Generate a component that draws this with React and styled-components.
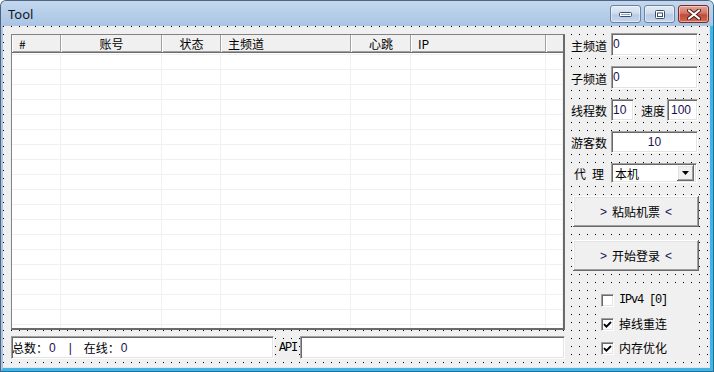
import React from 'react';
import styled, { createGlobalStyle, css } from 'styled-components';

const CJK = `"Noto Sans CJK SC", "Liberation Sans", sans-serif`;
const LATIN = `"Liberation Sans", "Noto Sans CJK SC", sans-serif`;
const MONO = `"Liberation Mono", "Noto Sans CJK SC", monospace`;
const INK = '#1a1050';

const GlobalStyle = createGlobalStyle`
  html, body { margin: 0; padding: 0; background: #ffffff; }
  body { font-family: ${CJK}; font-size: 12px; color: #000; }
`;

const columns = [
  { key: 'idx', label: '#', width: 49, align: 'left' },
  { key: 'account', label: '账号', width: 101, align: 'center' },
  { key: 'state', label: '状态', width: 59, align: 'center' },
  { key: 'main', label: '主频道', width: 130, align: 'left' },
  { key: 'beat', label: '心跳', width: 60, align: 'center' },
  { key: 'ip', label: 'IP', width: 135, align: 'left' },
  { key: 'fill', label: '', width: 17, align: 'left' },
];
const gridCols = columns.map((c) => `${c.width}px`).join(' ');
const emptyRows = Array.from({ length: 19 }, (_, i) => i);

const sunken = css`
  box-sizing: border-box;
  background: #ffffff;
  border: 1px solid;
  border-color: #a0a0a0 #ffffff #ffffff #a0a0a0;
  box-shadow: inset 1px 1px #696969, inset -1px -1px #e3e3e3;
`;

const raised = css`
  box-sizing: border-box;
  background: #f0f0f0;
  border: none;
  box-shadow: inset -1px -1px #696969, inset 1px 1px #ffffff,
    inset -2px -2px #a0a0a0, inset 2px 2px #e3e3e3;
`;

function Tick() {
  return (
    <svg width="9" height="9" viewBox="0 0 9 9">
      <path d="M1 4.2 L3.4 6.6 L8 2" stroke="#000" strokeWidth="1.9" fill="none" />
    </svg>
  );
}

export default function App() {
  return (
    <>
      <GlobalStyle />
      <Window>
        <TitleBar>
          <Caption>Tool</Caption>
          <CaptionButtons>
            <CaptionButton aria-label="minimize">
              <svg width="13" height="5" viewBox="0 0 13 5">
                <rect x="0.5" y="0.5" width="12" height="4" rx="1" fill="#ffffff" stroke="#3b4f6d" />
                <rect x="2" y="2" width="9" height="1" fill="#8ea6c6" />
              </svg>
            </CaptionButton>
            <CaptionButton aria-label="maximize">
              <svg width="10" height="9" viewBox="0 0 10 9">
                <rect x="0.5" y="0.5" width="9" height="8" rx="1" fill="#ffffff" stroke="#3b4f6d" />
                <rect x="2.5" y="3" width="5" height="3.5" fill="#ffffff" stroke="#3b4f6d" />
              </svg>
            </CaptionButton>
            <CaptionButton $close aria-label="close">
              <svg width="14" height="11" viewBox="0 0 14 11">
                <path d="M2 1.5 L12 9.5 M12 1.5 L2 9.5" stroke="#4a1a14" strokeWidth="4" strokeLinecap="round" />
                <path d="M2 1.5 L12 9.5 M12 1.5 L2 9.5" stroke="#ffffff" strokeWidth="2.2" strokeLinecap="round" />
              </svg>
            </CaptionButton>
          </CaptionButtons>
        </TitleBar>

        <Frame>
          <Client>
            <MainColumn>
              <ListView>
                <ListHeader>
                  {columns.map((c) => (
                    <HeaderCell key={c.key} $align={c.align}>{c.label}</HeaderCell>
                  ))}
                </ListHeader>
                <ListBody>
                  {emptyRows.map((r) => (
                    <ListRow key={r}>
                      {columns.map((c) => (
                        <ListCell key={c.key} />
                      ))}
                    </ListRow>
                  ))}
                </ListBody>
              </ListView>

              <BottomBar>
                <StatusBox>
                  总数：<Num>0</Num>
                  <Sep>|</Sep>
                  在线：<Num>0</Num>
                </StatusBox>
                <ApiLabel>API</ApiLabel>
                <ApiBox />
              </BottomBar>
            </MainColumn>

            <Side>
              <Fields>
                <Field $h={23}>
                  <FieldLabel>主频道</FieldLabel>
                  <TextBox $w={87}>0</TextBox>
                </Field>
                <Field $h={23}>
                  <FieldLabel>子频道</FieldLabel>
                  <TextBox $w={87}>0</TextBox>
                </Field>
                <Field $h={22}>
                  <FieldLabel>线程数</FieldLabel>
                  <TextBox $w={23}>10</TextBox>
                  <InlineLabel>速度</InlineLabel>
                  <TextBox $w={31} $pad={3}>100</TextBox>
                </Field>
                <Field $h={22}>
                  <FieldLabel>游客数</FieldLabel>
                  <TextBox $w={87} $center>10</TextBox>
                </Field>
                <Field $h={20}>
                  <FieldLabel $spread>
                    <span>代</span>
                    <span>理</span>
                  </FieldLabel>
                  <Combo>
                    <ComboText>本机</ComboText>
                    <ComboArrow>
                      <svg width="7" height="4" viewBox="0 0 7 4">
                        <path d="M0 0 H7 L3.5 4 Z" fill="#000" />
                      </svg>
                    </ComboArrow>
                  </Combo>
                </Field>
              </Fields>

              <Buttons>
                <PushButton>
                  <Arrow $side="left">&gt;</Arrow>粘贴机票<Arrow $side="right">&lt;</Arrow>
                </PushButton>
                <PushButton>
                  <Arrow $side="left">&gt;</Arrow>开始登录<Arrow $side="right">&lt;</Arrow>
                </PushButton>
              </Buttons>

              <Checks>
                <CheckRow>
                  <CheckBox />
                  <CheckText $mono>IPv4 [0]</CheckText>
                </CheckRow>
                <CheckRow>
                  <CheckBox>
                    <Tick />
                  </CheckBox>
                  <CheckText>掉线重连</CheckText>
                </CheckRow>
                <CheckRow>
                  <CheckBox>
                    <Tick />
                  </CheckBox>
                  <CheckText>内存优化</CheckText>
                </CheckRow>
              </Checks>
            </Side>
          </Client>
        </Frame>
      </Window>
    </>
  );
}

/* ---------------- window chrome ---------------- */

const Window = styled.div`
  width: 714px;
  height: 372px;
  box-sizing: border-box;
  display: flex;
  flex-direction: column;
  border: 1px solid #4f647e;
  border-right-color: #2b6c94;
  border-bottom-color: #2b6c94;
  border-radius: 6px 6px 0 0;
  background: #aac4e3;
  overflow: hidden;
`;

const TitleBar = styled.div`
  height: 25px;
  flex: none;
  display: flex;
  align-items: flex-start;
  background: linear-gradient(to bottom, #c4d8ee 0%, #b7cfea 45%, #a9c4e3 100%);
`;

const Caption = styled.div`
  font-family: "Noto Sans", ${LATIN};
  font-size: 13px;
  line-height: 16px;
  padding: 5px 0 0 7px;
  color: #101828;
`;

const CaptionButtons = styled.div`
  margin-left: auto;
  margin-right: 4px;
  margin-top: 4px;
  display: flex;
  gap: 3px;
`;

const CaptionButton = styled.div`
  width: 31px;
  height: 18px;
  box-sizing: border-box;
  border: 1px solid ${(p) => (p.$close ? '#7d2a20' : '#6b82a0')};
  border-radius: 3px;
  display: flex;
  align-items: center;
  justify-content: center;
  box-shadow: inset 0 0 0 1px rgba(255, 255, 255, 0.45);
  background: ${(p) =>
    p.$close
      ? 'linear-gradient(to bottom, #e6a497 0%, #d47566 45%, #c24b3a 55%, #cf6a52 100%)'
      : 'linear-gradient(to bottom, #e3ecf7 0%, #cfdcee 45%, #b9cce6 55%, #c6d7ec 100%)'};
`;

const Frame = styled.div`
  flex: 1;
  display: flex;
  border-left: 2px solid #aec6e4;
  border-right: 3px solid #3fb6e6;
  border-bottom: 3px solid #3fb6e6;
`;

const Client = styled.div`
  flex: 1;
  display: flex;
  align-items: flex-start;
  gap: 6px;
  padding: 7px 0 0 8px;
  border-right: 1px solid #dfe8f2;
  border-bottom: 1px solid #dfe8f2;
  background-color: #f0f0f0;
  background-image: conic-gradient(from 270deg at 1px 1px, #000 90deg, transparent 0);
  background-size: 8px 8px;
  background-position: 0 0;
`;

/* ---------------- list view ---------------- */

const MainColumn = styled.div`
  width: 554px;
  margin-top: 1px;
  display: flex;
  flex-direction: column;
  gap: 6px;
`;

const ListView = styled.div`
  width: 554px;
  height: 296px;
  box-sizing: border-box;
  border-top: 1px solid #828282;
  border-left: 1px solid #828282;
  border-right: 2px solid #6a6a6a;
  border-bottom: 2px solid #6a6a6a;
  background: #ffffff;
  overflow: hidden;
`;

const ListHeader = styled.div`
  display: grid;
  grid-template-columns: ${gridCols};
  height: 18px;
  box-sizing: border-box;
  background: #f0f0f0;
  border-bottom: 1px solid #6d6d6d;
  box-shadow: inset 0 -1px #a0a0a0;
`;

const HeaderCell = styled.div`
  box-sizing: border-box;
  border-left: 1px solid #ffffff;
  border-right: 1px solid #a0a0a0;
  padding: 0 6px;
  font-size: 12px;
  line-height: 17px;
  text-align: ${(p) => p.$align};
  white-space: nowrap;
  overflow: hidden;
  &:last-child { border-right: none; }
`;

const ListBody = styled.div`
  padding-top: 1px;
`;

const ListRow = styled.div`
  display: grid;
  grid-template-columns: ${gridCols};
  height: 15px;
  box-sizing: border-box;
  border-top: 1px solid #f0f0f0;
`;

const ListCell = styled.div`
  border-right: 1px solid #f0f0f0;
`;

/* ---------------- bottom bar ---------------- */

const BottomBar = styled.div`
  display: flex;
  align-items: center;
  height: 23px;
`;

const StatusBox = styled.div`
  ${sunken};
  width: 263px;
  height: 23px;
  display: flex;
  align-items: center;
  font-size: 12px;
  line-height: 16px;
  white-space: pre;
`;

const Num = styled.span`
  font-family: ${LATIN};
  color: ${INK};
  margin-left: 1px;
`;

const Sep = styled.span`
  font-family: ${LATIN};
  color: ${INK};
  margin: 0 12px 0 13px;
`;

const ApiLabel = styled.div`
  margin: 0 3px 0 5px;
  width: 18px;
  font-family: ${MONO};
  font-size: 12px;
  letter-spacing: -1.2px;
  line-height: 14px;
  background: #f0f0f0;
`;

const ApiBox = styled.div`
  ${sunken};
  flex: 1;
  height: 23px;
`;

/* ---------------- side panel ---------------- */

const Side = styled.div`
  width: 128px;
  display: flex;
  flex-direction: column;
`;

const Fields = styled.div`
  display: flex;
  flex-direction: column;
  gap: 10px;
`;

const Field = styled.div`
  height: ${(p) => p.$h}px;
  display: flex;
  align-items: center;
`;

const FieldLabel = styled.div`
  width: 36px;
  margin-right: 4px;
  margin-top: 2px;
  display: flex;
  justify-content: ${(p) => (p.$spread ? 'center' : 'flex-start')};
  gap: 6px;
  font-size: 12px;
  line-height: 16px;
  white-space: nowrap;
  background: #f0f0f0;
`;

const InlineLabel = styled.div`
  margin: 2px 2px 0 7px;
  font-size: 12px;
  line-height: 16px;
  white-space: nowrap;
  background: #f0f0f0;
`;

const TextBox = styled.div`
  ${sunken};
  width: ${(p) => p.$w}px;
  height: 100%;
  padding: 0 ${(p) => p.$pad || 1}px;
  font-family: ${LATIN};
  font-size: 12px;
  line-height: 20px;
  color: ${INK};
  text-align: ${(p) => (p.$center ? 'center' : 'left')};
`;

const Combo = styled.div`
  ${sunken};
  width: 86px;
  height: 100%;
  display: flex;
  align-items: center;
  padding: 0 2px 0 2px;
`;

const ComboText = styled.span`
  font-size: 12px;
  line-height: 16px;
  margin-left: 1px;
  margin-top: 1px;
`;

const ComboArrow = styled.span`
  ${raised};
  margin-left: auto;
  width: 17px;
  height: 16px;
  display: flex;
  align-items: center;
  justify-content: center;
`;

const Buttons = styled.div`
  margin-top: 13px;
  display: flex;
  flex-direction: column;
  gap: 13px;
`;

const PushButton = styled.button`
  ${raised};
  width: 126px;
  height: 31px;
  margin-left: 2px;
  padding: 0;
  display: flex;
  align-items: center;
  justify-content: center;
  font-family: ${CJK};
  font-size: 12px;
  color: #000;
`;

const Arrow = styled.span`
  font-family: ${LATIN};
  color: ${INK};
  margin: ${(p) => (p.$side === 'left' ? '0 5px 0 0' : '0 0 0 5px')};
`;

const Checks = styled.div`
  margin-top: 17px;
  margin-left: 26px;
  width: 102px;
  display: flex;
  flex-direction: column;
  background: #f0f0f0;
`;

const CheckRow = styled.div`
  height: 24px;
  display: flex;
  align-items: center;
  gap: 5px;
  padding-left: 4px;
`;

const CheckBox = styled.span`
  ${sunken};
  width: 13px;
  height: 13px;
  display: flex;
  align-items: center;
  justify-content: center;
  flex: none;
`;

const CheckText = styled.span`
  font-family: ${(p) => (p.$mono ? MONO : CJK)};
  font-size: 12px;
  letter-spacing: ${(p) => (p.$mono ? '-1.2px' : '0')};
  line-height: 16px;
  white-space: pre;
`;
